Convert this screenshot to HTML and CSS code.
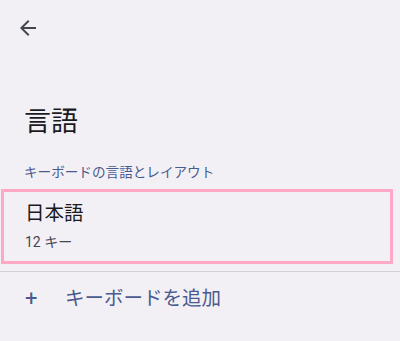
FILE: index.html
```html
<!DOCTYPE html>
<html lang="ja">
<head>
<meta charset="utf-8">
<link rel="stylesheet" href="styles.css">
</head>
<body>
<div class="screen">
  <div class="topbar">
    <svg class="back" width="24" height="24" viewBox="0 0 24 24"><path d="M20 11H7.83l5.59-5.59L12 4l-8 8 8 8 1.41-1.41L7.83 13H20v-2z" fill="#44464f"/></svg>
  </div>
  <h1 class="title">言語</h1>
  <div class="section-label">キーボードの言語とレイアウト</div>
  <div class="item">
    <div class="item-title">日本語</div>
    <div class="item-sub">12 キー</div>
  </div>
  <div class="divider"></div>
  <div class="add-row">
    <span class="plus">+</span>
    <span class="add-text">キーボードを追加</span>
  </div>
</div>
</body>
</html>
```
FILE: styles.css
```css
html, body {
  margin: 0;
  padding: 0;
  background: #f2f0f5;
}
.screen {
  width: 400px;
  height: 341px;
  font-family: Roboto, "Noto Sans CJK JP", sans-serif;
  color: #1b1b1f;
}
.topbar {
  padding: 16px 16px 0 16px;
  height: 24px;
}
.back {
  display: block;
}
.title {
  margin: 0;
  padding: 64px 24px 0 24px;
  font-size: 27px;
  font-weight: 400;
  line-height: 36px;
}
.section-label {
  margin-top: 22px;
  padding: 0 24px;
  font-size: 13.6px;
  line-height: 20px;
  color: #4a5a8f;
}
.item {
  margin: 7px 7px 0 1px;
  border: 3px solid #fda9c5;
  padding: 8px 21px 9px 21px;
}
.item-title {
  font-size: 19.5px;
  line-height: 28px;
}
.item-sub {
  margin-top: 4px;
  font-size: 14px;
  line-height: 20px;
  color: #44464f;
}
.divider {
  margin-top: 7px;
  height: 1px;
  background: #d2d0d6;
}
.add-row {
  display: flex;
  align-items: center;
  padding: 13px 24px;
  color: #4a5a8f;
}
.plus {
  width: 40px;
  font-size: 22px;
  line-height: 28px;
  padding-left: 1px;
}
.add-text {
  font-size: 19.5px;
  line-height: 28px;
}
```
